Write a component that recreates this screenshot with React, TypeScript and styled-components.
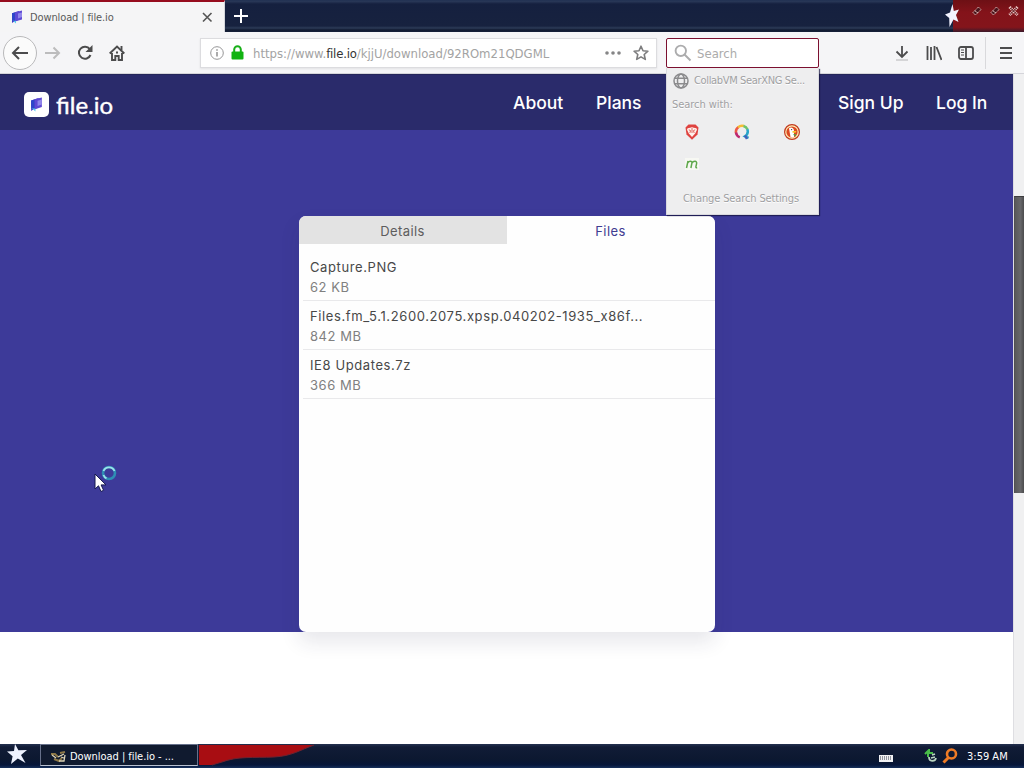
import { useState } from "react";
import styled, { createGlobalStyle } from "styled-components";

const GlobalStyle = createGlobalStyle`
  * {
    box-sizing: border-box;
  }
  body {
    margin: 0;
    overflow: hidden;
  }
  button {
    border: 0;
    padding: 0;
    background: none;
    font: inherit;
    color: inherit;
  }
  svg {
    display: block;
    flex: none;
  }
`;

const uiFont = `"DejaVu Sans Condensed", "DejaVu Sans", sans-serif`;

const Desktop = styled.div`
  position: relative;
  display: flex;
  flex-direction: column;
  width: 1024px;
  height: 768px;
  overflow: hidden;
  background: #fff;
  font-family: ${uiFont};
  font-stretch: condensed;
`;

/* ---------- title bar ---------- */

const TitleBar = styled.div`
  display: flex;
  height: 32px;
  flex: none;
  background: linear-gradient(
    #1c2c4e 0,
    #2b3a5a 1px,
    #15203f 4px,
    #17223f 26px,
    #2c3b57 28px,
    #101a30 30px,
    #17213a 32px
  );
`;

const BrowserTab = styled.div`
  display: flex;
  align-items: center;
  width: 225px;
  height: 32px;
  padding: 0 11px 0 10px;
  border-top: 2px solid #960c1e;
  border-right: 1px solid #d5d7dc;
  background: #f5f5f6;
`;

const TabTitle = styled.span`
  flex: 1;
  margin-left: 6px;
  font-size: 11px;
  letter-spacing: -0.12px;
  color: #5a5a5a;
`;

const NewTab = styled.button`
  display: flex;
  width: 32px;
  justify-content: center;
  align-items: center;
`;

const WindowControls = styled.div`
  display: flex;
  margin-left: auto;
`;

const WindowStar = styled.svg`
  position: relative;
  z-index: 1;
  margin-right: -7px;
`;

const ControlStrip = styled.div`
  display: flex;
  justify-content: flex-end;
  gap: 8px;
  width: 71px;
  padding: 5px 5px 0 0;
  background: linear-gradient(#6d1015, #84131a 40%, #84151b 85%, #3b1a2b);
`;

/* ---------- toolbar ---------- */

const Toolbar = styled.div`
  display: flex;
  align-items: center;
  height: 42px;
  flex: none;
  background: #f5f5f7;
  border-bottom: 1px solid #d5d5da;
`;

const NavButtons = styled.div`
  display: flex;
  align-items: center;
  width: 200px;
  padding-left: 3px;
`;

const BackButton = styled.button`
  display: flex;
  align-items: center;
  justify-content: center;
  width: 34px;
  height: 34px;
  border: 1px solid #b9b9bb;
  border-radius: 50%;
  background: #fbfbfb;
`;

const ToolButton = styled.button<{ $width?: number }>`
  display: flex;
  align-items: center;
  justify-content: center;
  width: ${(p) => p.$width ?? 32}px;
  height: 32px;
`;

const UrlBar = styled.div`
  display: flex;
  align-items: center;
  width: 457px;
  height: 30px;
  padding: 0 7px 0 9px;
  border: 1px solid #dcdcdf;
  background: #fff;
  box-shadow: 0 1px 2px rgba(0, 0, 0, 0.08);
`;

const LockIcon = styled.svg`
  margin-left: 7px;
`;

const BookmarkStar = styled.svg`
  margin-left: 12px;
`;

const UrlText = styled.span`
  flex: 1;
  margin-left: 9px;
  padding-top: 1px;
  font-size: 13px;
  letter-spacing: 0;
  white-space: nowrap;
  color: #a3a3a3;

  b {
    font-weight: normal;
    letter-spacing: -0.2px;
    color: #333;
  }
`;

const SearchWrap = styled.div`
  position: relative;
  width: 153px;
  margin-left: 9px;
`;

const SearchBox = styled.div`
  display: flex;
  align-items: center;
  height: 30px;
  padding-left: 7px;
  border: 1px solid #7c1030;
  border-radius: 2px;
  background: #fff;
  font-size: 13px;
  letter-spacing: 0;
  color: #ababab;

  span {
    margin-left: 5px;
    padding-top: 1px;
  }
`;

const SearchPopup = styled.div`
  position: absolute;
  z-index: 3;
  top: 30px;
  left: 0;
  width: 153px;
  height: 147px;
  background: #eeeeef;
  border: 1px solid #d9d9de;
  border-top: 0;
  box-shadow: 1px 1px 1px rgba(20, 18, 60, 0.7);
  font-size: 11px;
  color: #a0a0a2;
  text-shadow: 0 1px 0 #fff;
`;

const EngineName = styled.div`
  display: flex;
  align-items: center;
  gap: 5px;
  height: 25px;
  padding: 1px 0 0 6px;
  white-space: nowrap;
  letter-spacing: -0.35px;
`;

const SearchWith = styled.div`
  height: 23px;
  padding-left: 5px;
  line-height: 23px;
  letter-spacing: -0.05px;
`;

const EngineGrid = styled.div`
  display: grid;
  grid-template-columns: repeat(3, 50px);
  grid-auto-rows: 32px;
`;

const Engine = styled.button`
  display: flex;
  align-items: center;
  justify-content: center;
`;

const SearchSettings = styled.div`
  height: 36px;
  padding: 2px 3px 0 0;
  line-height: 34px;
  text-align: center;
  letter-spacing: -0.13px;
`;

const ToolGroup = styled.div`
  display: flex;
  align-items: center;
  margin-left: auto;
`;

const Divider = styled.div`
  width: 1px;
  height: 32px;
  margin: 0 1px 0 3px;
  background: #d9d9dc;
`;

/* ---------- page ---------- */

const Viewport = styled.div`
  display: flex;
  height: 670px;
  flex: none;
`;

const Page = styled.main`
  width: 1013px;
  background: #fff;
  font-family: Inter, sans-serif;
  font-stretch: normal;
`;

const SiteHeader = styled.header`
  display: flex;
  align-items: center;
  height: 56px;
  padding: 0 25px 0 24px;
  border-top: 1px solid #24265a;
  background: #2a2b6b;
  color: #fff;
`;

const Brand = styled.div`
  display: flex;
  align-items: center;
  gap: 7px;
  padding-top: 4px;
  font-family: Lato, sans-serif;
  font-size: 24px;
  line-height: 26px;
  letter-spacing: 0;
  -webkit-text-stroke: 0.4px #fff;
`;

const SiteNav = styled.nav`
  display: flex;
  gap: 33px;
  margin-left: auto;
  font-size: 17.5px;
  font-weight: 500;
  line-height: 22px;
  padding-top: 1px;
`;

const NavLink = styled.a<{ $width: number; $gapBefore?: number }>`
  width: ${(p) => p.$width}px;
  margin-left: ${(p) => p.$gapBefore ?? 0}px;
  white-space: nowrap;
`;

const Hero = styled.section`
  height: 502px;
  padding: 86px 0 0 299px;
  background: #3d3a99;
`;

const Card = styled.div`
  width: 416px;
  height: 416px;
  border-radius: 7px;
  background: #fefefe;
  box-shadow: 0 10px 20px rgba(40, 40, 70, 0.11);
`;

const CardTabs = styled.div`
  display: flex;
  height: 28px;
  border-radius: 7px 7px 0 0;
  overflow: hidden;
`;

const CardTab = styled.button<{ $active: boolean }>`
  width: 208px;
  padding: 2px 1px 0 0;
  font-size: 13px;
  letter-spacing: 0.4px;
  background: ${(p) => (p.$active ? "#fefefe" : "#e3e3e3")};
  color: ${(p) => (p.$active ? "#403c91" : "#5d5d5d")};
`;

const FileList = styled.ul`
  list-style: none;
  margin: 0;
  padding: 8px 0 0 4px;
`;

const FileRow = styled.li`
  height: 49px;
  padding: 5px 7px 0;
  border-bottom: 1px solid #e9e9eb;
  font-size: 13px;
  line-height: 20px;
  color: #484848;
`;

const FileName = styled.div`
  letter-spacing: 0.6px;
`;

const FileSize = styled.div`
  color: #808080;
  letter-spacing: 0.55px;
`;

const Scrollbar = styled.div`
  width: 11px;
  padding-top: 122px;
  border-left: 1px solid #dedee2;
  background: #f0f0f1;
`;

const ScrollThumb = styled.div`
  height: 297px;
  border-top: 1px solid #3d3d3f;
  border-left: 1px solid #505052;
  background: linear-gradient(90deg, #58585a, #67676a 60%, #4c4c4e);
`;

/* ---------- taskbar ---------- */

const Taskbar = styled.footer`
  display: flex;
  height: 24px;
  flex: none;
  background: linear-gradient(#243150, #111c36 3px, #0c1830 15px, #06163a 21px, #17315d);
  color: #fff;
  font-size: 11px;
`;

const StartButton = styled.button`
  display: flex;
  width: 40px;
  padding-left: 7px;
`;

const TaskButton = styled.button`
  display: flex;
  align-items: center;
  gap: 3px;
  width: 158px;
  height: 22px;
  padding: 3px 0 0 10px;
  border: 1px solid #66708a;
  border-bottom: 1px solid #b9c1d0;
  background: #101a2f;
  letter-spacing: -0.05px;
  white-space: nowrap;
`;

const Tray = styled.div`
  display: flex;
  align-items: center;
  margin-left: auto;
  padding-right: 16px;
`;

const KeyboardIcon = styled.svg`
  margin: 4px 31px 0 0;
`;

const Clock = styled.span`
  width: 41px;
  margin-left: 9px;
  white-space: nowrap;
`;

const Pointer = styled.svg`
  position: absolute;
  left: 92px;
  top: 462px;
`;

/* ---------- icons ---------- */

const FileLogo = ({ size }: { size: number }) => (
  <svg width={size} height={size} viewBox="0 0 14 14">
    <path d="M2 3.2 9 1v8.8L4.2 11.4 2 13z" fill="#4536c8" />
    <path d="M5 2.2 12 .4v9L5 11.6z" fill="#5e49d4" />
    <path d="M8 3.6 12 2.4v4.6L8 8.4z" fill="#9186ea" />
    <path d="M2 9.8 6 13.6V11z" fill="#54c8ec" />
    <path d="M2 3.2 5 2.4v8L2 10.8z" fill="#2e45ca" />
  </svg>
);

const Star = ({ size }: { size: number }) => (
  <svg width={size} height={size} viewBox="0 0 20 20">
    <path
      d="M8 0 11.4 6.3 20 6 14 11 18.5 19 10.8 14.6 4 20 5.6 12.2 0 7.6 7 7z"
      fill="#eef2ff"
    />
  </svg>
);

const EngineIcon = ({ name }: { name: string }) => {
  switch (name) {
    case "brave":
      return (
        <svg width="16" height="16" viewBox="0 0 16 16">
          <path d="M4.5 .5h7l3 3-1 7L8 15.8 2.5 10.5l-1-7z" fill="#df4340" />
          <path d="M3.6 4.2 6.2 3.8 8 3.2l1.8.6 2.6.4.6 1.5-1.8 3.8L8 13 4.8 9.5 3 5.7z" fill="#fff1ec" />
          <path d="M4.8 5.8 6.6 6.6 5.8 9M11.2 5.8 9.4 6.6l.8 2.4M8 4v5" fill="none" stroke="#dd5a52" strokeWidth=".9" />
        </svg>
      );
    case "qwant":
      return (
        <svg width="16" height="16" viewBox="0 0 16 16" fill="none" strokeWidth="2.5">
          <path d="M2 9A6 6 0 0 1 4.5 3" stroke="#ed5946" />
          <path d="M4 3.4A6 6 0 0 1 10 2" stroke="#f5bd35" />
          <path d="M9.5 2a6 6 0 0 1 4 3.5" stroke="#70c46a" />
          <path d="M13.3 5.2A6 6 0 0 1 11 12.3l3.6 1.6" stroke="#28a6c9" />
          <path d="M2 8.5a6 6 0 0 0 3.8 4.8" stroke="#bd2871" />
          <path d="m11 11.5 2 3.3" stroke="#4262bd" />
        </svg>
      );
    case "duck":
      return (
        <svg width="16" height="16" viewBox="0 0 16 16">
          <circle cx="8" cy="8" r="7.4" fill="#fff0b8" stroke="#c23a20" strokeWidth="1.2" />
          <circle cx="8" cy="8" r="5.6" fill="#dc4a22" />
          <path d="M5 4.3c2-2 5-.4 5 2.3v6.3c-1.3.7-2.5.6-3.5.2z" fill="#fff" />
          <path d="M8.5 7h4l-1 1.7-3 .1z" fill="#f9c62d" />
          <path d="m8.8 10.5 3-.6v2.6z" fill="#48a64a" />
          <circle cx="7.6" cy="5.6" r=".7" fill="#33415a" />
        </svg>
      );
    default:
      return (
        <svg width="16" height="16" viewBox="0 0 16 16">
          <rect x="1" y="2" width="14" height="12" fill="#f7f8f3" />
          <path
            d="M2.5 12 4 5M3.7 7C5 4.5 8.4 4.6 7.9 7.1L6.9 12M7.8 7.2c1.6-2.8 5.4-2.5 4.8.4L11.9 10.6c-.2 1 .4 1.3 1.3 1"
            fill="none"
            stroke="#5fa84c"
            strokeWidth="1.5"
          />
        </svg>
      );
  }
};

const DiamondControl = () => (
  <svg width="10" height="12" viewBox="0 0 10 12">
    <path d="M1 7.5 6.5 2 9 4.5 3.5 10z" fill="#47131a" stroke="#e7c8c5" strokeDasharray="1.4 .7" />
    <path d="m3 6 3 2" stroke="#e7c8c5" strokeWidth=".8" />
  </svg>
);

const engines = ["brave", "qwant", "duck", "mojeek"];

const links = [
  { label: "About", width: 50 },
  { label: "Plans", width: 46 },
  { label: "Sign Up", width: 65, gapBefore: 163 },
  { label: "Log In", width: 52 },
];

const files = [
  { name: "Capture.PNG", size: "62 KB" },
  { name: "Files.fm_5.1.2600.2075.xpsp.040202-1935_x86f...", size: "842 MB" },
  { name: "IE8 Updates.7z", size: "366 MB" },
];

function App() {
  const [activeTab, setActiveTab] = useState("Files");

  return (
    <>
      <GlobalStyle />
      <Desktop>
        <TitleBar>
          <BrowserTab>
            <FileLogo size={14} />
            <TabTitle>Download | file.io</TabTitle>
            <svg width="12" height="12" viewBox="0 0 12 12">
              <path d="m2 2 8.5 8.5M10.5 2 2 10.5" stroke="#555" strokeWidth="1.6" />
            </svg>
          </BrowserTab>
          <NewTab>
            <svg width="14" height="14" viewBox="0 0 14 14">
              <path d="M7 0v14M0 7h14" stroke="#fff" strokeWidth="2" />
            </svg>
          </NewTab>
          <WindowControls>
            <WindowStar width="16" height="27" viewBox="0 0 16 27">
              <path
                d="M8.5 4 9.8 11 15 9.5 12 15 14.5 22 9.5 19.5 5.5 27 5.2 18 1 14.5 6 12.5z"
                fill="#f2f3ff"
              />
            </WindowStar>
            <ControlStrip>
              <DiamondControl />
              <DiamondControl />
              <svg width="11" height="12" viewBox="0 0 11 12">
                <path d="m1.5 2 8 8M9.5 2l-8 8" stroke="#e7c8c5" strokeWidth="3" strokeDasharray="1.5 .6" />
                <path d="m2.5 3 6 6M8.5 3l-6 6" stroke="#571319" />
              </svg>
            </ControlStrip>
          </WindowControls>
        </TitleBar>

        <Toolbar>
          <NavButtons>
            <BackButton>
              <svg width="18" height="16" viewBox="0 0 18 16" fill="none" stroke="#4c4c4d" strokeWidth="2">
                <path d="M17 8H2M8 2 2 8l6 6" />
              </svg>
            </BackButton>
            <ToolButton>
              <svg width="16" height="14" viewBox="0 0 16 14" fill="none" stroke="#bcbcbd" strokeWidth="2">
                <path d="M0 7h14M8.5 1.5 14 7l-5.5 5.5" />
              </svg>
            </ToolButton>
            <ToolButton>
              <svg width="16" height="16" viewBox="0 0 16 16" fill="none" stroke="#4c4c4d" strokeWidth="2">
                <path d="M13.5 10A6 6 0 1 1 12.8 4.2L14 5.4" />
                <path d="M15.5 0v7h-7z" fill="#4c4c4d" stroke="none" />
              </svg>
            </ToolButton>
            <ToolButton>
              <svg width="16" height="16" viewBox="0 0 16 16" fill="none" stroke="#4c4c4d" strokeWidth="1.9">
                <path d="m.7 8.5 7.3-7 7.3 7M3 8v7h3.3v-4h3.4v4H13V8" />
                <path d="M12.5 1v4M7 7.5h2" />
              </svg>
            </ToolButton>
          </NavButtons>

          <UrlBar>
            <svg width="14" height="14" viewBox="0 0 14 14" fill="none" stroke="#969697">
              <circle cx="7" cy="7" r="6.3" />
              <path d="M7 6v4.5M7 3.3v1.5" strokeWidth="1.6" />
            </svg>
            <LockIcon width="13" height="15" viewBox="0 0 13 15">
              <path d="M3.2 7V4.5a3.3 3.3 0 0 1 6.6 0V7" fill="none" stroke="#18af18" strokeWidth="2" />
              <rect x=".5" y="6.5" width="12" height="8" rx="1" fill="#12b312" />
            </LockIcon>
            <UrlText>
              https://www.<b>file.io</b>/kjjU/download/92ROm21QDGML
            </UrlText>
            <svg width="16" height="4" viewBox="0 0 16 4" fill="#858586">
              <circle cx="2" cy="2" r="1.8" />
              <circle cx="8" cy="2" r="1.8" />
              <circle cx="14" cy="2" r="1.8" />
            </svg>
            <BookmarkStar width="16" height="16" viewBox="0 0 16 16">
              <path
                d="m8 1.2 2 4.5 4.9.5-3.7 3.3 1.1 4.9L8 11.9l-4.3 2.5 1.1-4.9L1.1 6.2 6 5.7z"
                fill="none"
                stroke="#7d7d7e"
                strokeWidth="1.6"
                strokeLinejoin="round"
              />
            </BookmarkStar>
          </UrlBar>

          <SearchWrap>
            <SearchBox>
              <svg width="18" height="18" viewBox="0 0 18 18" fill="none" stroke="#acacad" strokeWidth="1.9">
                <circle cx="6.8" cy="6.8" r="5.2" />
                <path d="m10.5 10.5 6 6" />
              </svg>
              <span>Search</span>
            </SearchBox>
            <SearchPopup>
              <EngineName>
                <svg width="16" height="16" viewBox="0 0 16 16" fill="none" stroke="#8b8b8d" strokeWidth="1.5">
                  <circle cx="8" cy="8" r="7" />
                  <ellipse cx="8" cy="8" rx="3.5" ry="7" />
                  <path d="M1.8 5.3h12.4M1.8 10.7h12.4" />
                </svg>
                CollabVM SearXNG Se...
              </EngineName>
              <SearchWith>Search with:</SearchWith>
              <EngineGrid>
                {engines.map((engine) => (
                  <Engine key={engine}>
                    <EngineIcon name={engine} />
                  </Engine>
                ))}
              </EngineGrid>
              <SearchSettings>Change Search Settings</SearchSettings>
            </SearchPopup>
          </SearchWrap>

          <ToolGroup>
            <ToolButton>
              <svg width="14" height="16" viewBox="0 0 14 16" fill="none" stroke="#4c4c4d" strokeWidth="1.8">
                <path d="M7 1v10.5M1.5 6.5 7 12l5.500-5.500" />
                <path d="M1 15h12" stroke="#c8c8c9" strokeWidth="1.4" />
              </svg>
            </ToolButton>
            <ToolButton>
              <svg width="16" height="16" viewBox="0 0 16 16" fill="none" stroke="#4c4c4d" strokeWidth="1.8">
                <path d="M1.5 1v14M5 2v13M8.500 1v14M10.500 2l5 13" />
              </svg>
            </ToolButton>
            <ToolButton>
              <svg width="16" height="14" viewBox="0 0 16 14" fill="none" stroke="#4c4c4d" strokeWidth="1.8">
                <rect x="1" y="1" width="14" height="12" rx="2" />
                <path d="M8 1v12" />
                <path d="M3 4h3M3 6.500h3M3 9h3" strokeWidth="1" />
              </svg>
            </ToolButton>
            <Divider />
            <ToolButton $width={37}>
              <svg width="12" height="12" viewBox="0 0 12 12" stroke="#4c4c4d" strokeWidth="1.8">
                <path d="M0 1h12M0 6h12M0 11h12" />
              </svg>
            </ToolButton>
          </ToolGroup>
        </Toolbar>

        <Viewport>
          <Page>
            <SiteHeader>
              <Brand>
                <svg width="25" height="25" viewBox="0 0 25 25">
                  <rect width="25" height="25" rx="5" fill="#fff" />
                  <svg x="5" y="5" width="15" height="15">
                    <FileLogo size={15} />
                  </svg>
                </svg>
                file.io
              </Brand>
              <SiteNav>
                {links.map((link) => (
                  <NavLink key={link.label} $width={link.width} $gapBefore={link.gapBefore}>
                    {link.label}
                  </NavLink>
                ))}
              </SiteNav>
            </SiteHeader>
            <Hero>
              <Card>
                <CardTabs>
                  {["Details", "Files"].map((tab) => (
                    <CardTab key={tab} $active={tab === activeTab} onClick={() => setActiveTab(tab)}>
                      {tab}
                    </CardTab>
                  ))}
                </CardTabs>
                <FileList>
                  {files.map((file) => (
                    <FileRow key={file.name}>
                      <FileName>{file.name}</FileName>
                      <FileSize>{file.size}</FileSize>
                    </FileRow>
                  ))}
                </FileList>
              </Card>
            </Hero>
          </Page>
          <Scrollbar>
            <ScrollThumb />
          </Scrollbar>
        </Viewport>

        <Taskbar>
          <StartButton>
            <Star size={20} />
          </StartButton>
          <TaskButton>
            <svg width="16" height="14" viewBox="0 0 16 14" fill="none">
              <path d="M0 4h4l3 3M3 9l5 2 3-3M9 3l5-1" stroke="#8d7848" strokeWidth="2" />
              <path d="m1 5 4 3M7 7l6-3M8 11h5l1-6M10 7l3 1" stroke="#ded5b8" strokeWidth="1.300" />
            </svg>
            Download | file.io - ...
          </TaskButton>
          <svg width="120" height="24" viewBox="0 0 120 24">
            <path d="M1 1h115C102 6 94 12 76 13 55 14 40 12 24 18L14 21H1z" fill="#a80d12" />
            <path d="M14 21 24 18C40 12 55 14 76 13 94 12 102 6 116 1" fill="none" stroke="#6d2330" />
          </svg>
          <Tray>
            <KeyboardIcon width="14" height="8" viewBox="0 0 14 8">
              <rect width="14" height="7" y="1" fill="#f1f1f3" />
              <path d="M1 3h12M1 5h12" stroke="#303849" strokeDasharray="1 1" />
            </KeyboardIcon>
            <svg width="14" height="14" viewBox="0 0 14 14" fill="none">
              <path d="M1 5 5 1v3h4M4 3v5" stroke="#49bd48" strokeWidth="2" />
              <path d="M5 8c0 5 6 5 7 1M8 6l3-1M7 9l4-1" stroke="#bad4c2" strokeWidth="1.8" />
            </svg>
            <svg width="20" height="16" viewBox="-4 0 20 16" fill="none" stroke="#ee7b25">
              <circle cx="9.5" cy="6" r="4.5" strokeWidth="2.6" />
              <path d="m6.5 9.5-5 5" strokeWidth="3" />
            </svg>
            <Clock>3:59 AM</Clock>
          </Tray>
        </Taskbar>

        <Pointer width="28" height="32" viewBox="0 0 28 32">
          <path d="M3 12v15l3.500-3.200L9 29.500l2.600-1.200-2.500-5.400H14z" fill="#fff" stroke="#171a50" strokeWidth="1" />
          <circle cx="17" cy="11" r="6" fill="none" stroke="#2e8db4" strokeWidth="2.600" />
          <path d="M11.500 9a6 6 0 0 1 11 0M11.500 13a6 6 0 0 0 3 3.400" fill="none" stroke="#9be3ea" strokeWidth="1.800" />
        </Pointer>
      </Desktop>
    </>
  );
}

export default App;
